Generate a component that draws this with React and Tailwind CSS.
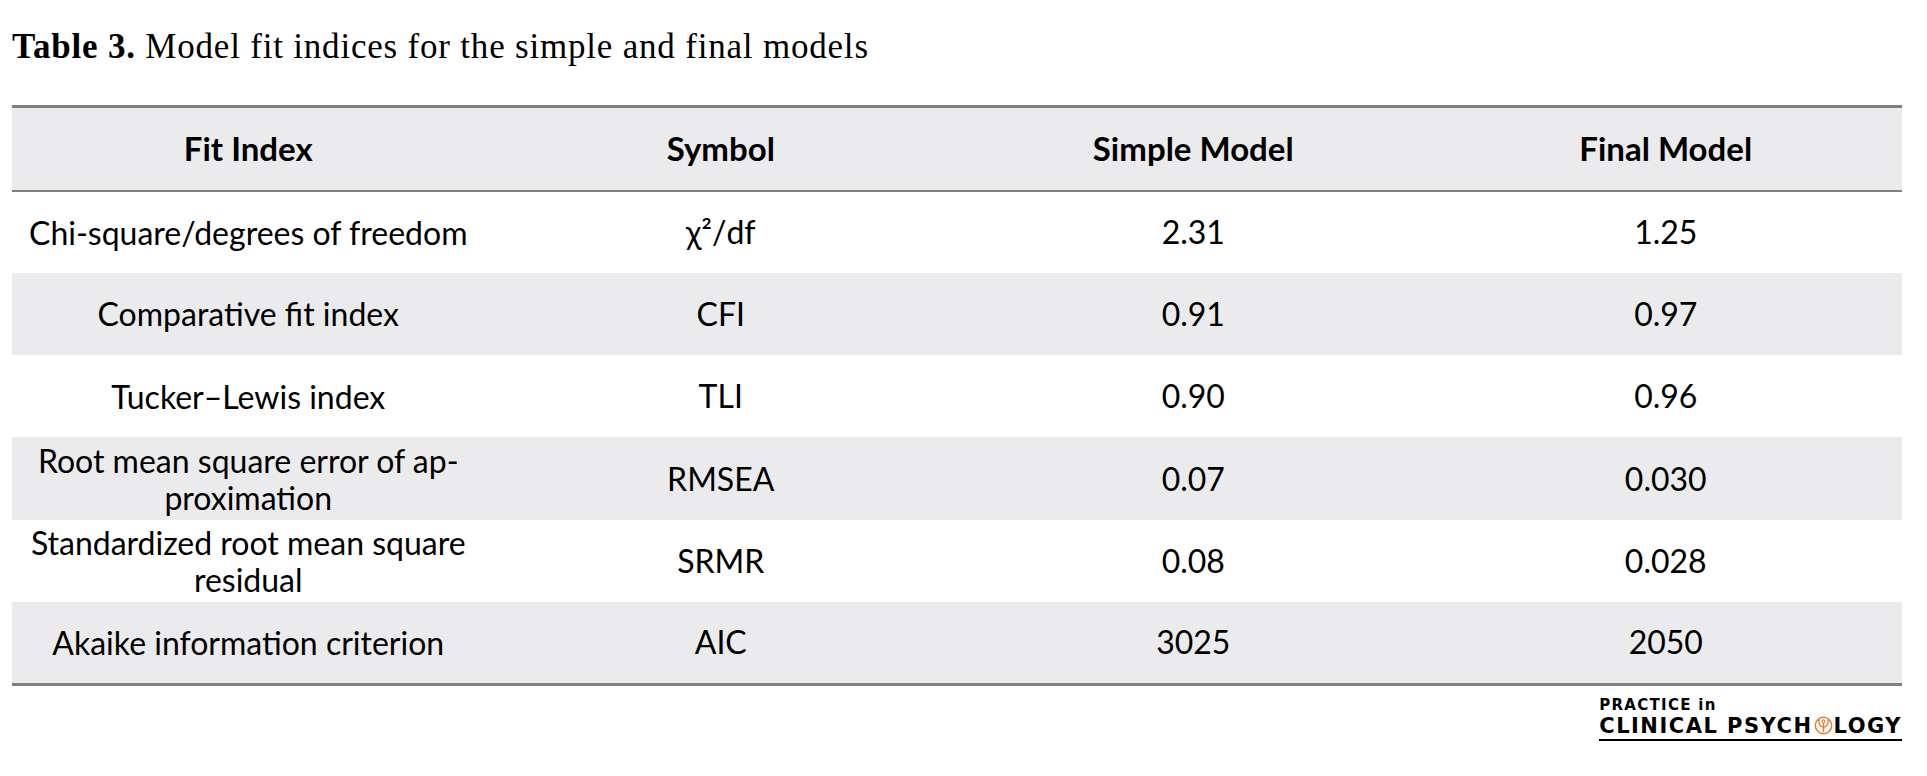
import React from "react";

const rows = [
  { name: ["Chi-square/degrees of freedom"], symbol: "χ²/df", simple: "2.31", final: "1.25" },
  { name: ["Comparative fit index"], symbol: "CFI", simple: "0.91", final: "0.97" },
  { name: ["Tucker–Lewis index"], symbol: "TLI", simple: "0.90", final: "0.96" },
  { name: ["Root mean square error of ap-", "proximation"], symbol: "RMSEA", simple: "0.07", final: "0.030" },
  { name: ["Standardized root mean square", "residual"], symbol: "SRMR", simple: "0.08", final: "0.028" },
  { name: ["Akaike information criterion"], symbol: "AIC", simple: "3025", final: "2050" },
];

const PsychIcon = () => (
  <svg width="19" height="19" viewBox="-10 -10 20 20" className="inline-block mx-[1px] -mt-[2px] align-middle">
    <circle cx="0" cy="0" r="8.6" fill="none" stroke="#e8782a" strokeWidth="1.5" />
    <path d="M-5 -4.5 Q-4.5 1.5 0 1.5 Q4.5 1.5 5 -4.5" fill="none" stroke="#e8782a" strokeWidth="1.4" />
    <path d="M0 -2.5 L0 7" stroke="#e8782a" strokeWidth="1.4" />
    <circle cx="0" cy="-4.3" r="1.6" fill="none" stroke="#e8782a" strokeWidth="1.1" />
    <circle cx="-5" cy="-5.6" r="1.1" fill="#e8782a" />
    <circle cx="5" cy="-5.6" r="1.1" fill="#e8782a" />
  </svg>
);

const Logo = () => (
  <div className="flex justify-end pr-[25px] mt-[11px]">
    <div className="flex flex-col font-['DejaVu_Sans',sans-serif] font-bold text-black">
      <span className="text-[15px] leading-[17px] tracking-[1.3px]">PRACTICE in</span>
      <span className="text-[21px] leading-[24px] tracking-[1.5px] whitespace-nowrap">
        CLINICAL PSYCH<PsychIcon />LOGY
      </span>
      <div className="h-[2px] bg-black mt-[1px]" />
    </div>
  </div>
);

export default function App() {
  return (
    <div className="w-[1927px] h-[776px] bg-white overflow-hidden">
      <div className="pl-[12px] pt-[27px]">
        <h1 className="font-['Liberation_Serif',serif] text-[35px] leading-[40px] tracking-[0.8px] text-black">
          <span className="font-bold">Table 3.</span> Model fit indices for the simple and final models
        </h1>
        <table className="mt-[38px] w-[1890px] table-fixed border-collapse font-['Lato',sans-serif] text-black">
          <thead>
            <tr className="bg-[#ebebed] border-t-[3px] border-b-[2px] border-[#7f7f7f] h-[84px]">
              <th className="font-bold text-[33px]">Fit Index</th>
              <th className="font-bold text-[33px]">Symbol</th>
              <th className="font-bold text-[33px]">Simple Model</th>
              <th className="font-bold text-[33px]">Final Model</th>
            </tr>
          </thead>
          <tbody className="border-b-[3px] border-[#7f7f7f]">
            {rows.map((r, i) => (
              <tr key={r.symbol} className={(i % 2 === 1 ? "bg-[#ebebed] " : "bg-white ") + "h-[82.3px]"}>
                <td className="text-center text-[32px] leading-[37px] px-[10px]">
                  {r.name.map((line) => (
                    <div key={line} className="whitespace-nowrap">{line}</div>
                  ))}
                </td>
                <td className="text-center text-[32px]">{r.symbol}</td>
                <td className="text-center text-[32px]">{r.simple}</td>
                <td className="text-center text-[32px]">{r.final}</td>
              </tr>
            ))}
          </tbody>
        </table>
        <Logo />
      </div>
    </div>
  );
}
